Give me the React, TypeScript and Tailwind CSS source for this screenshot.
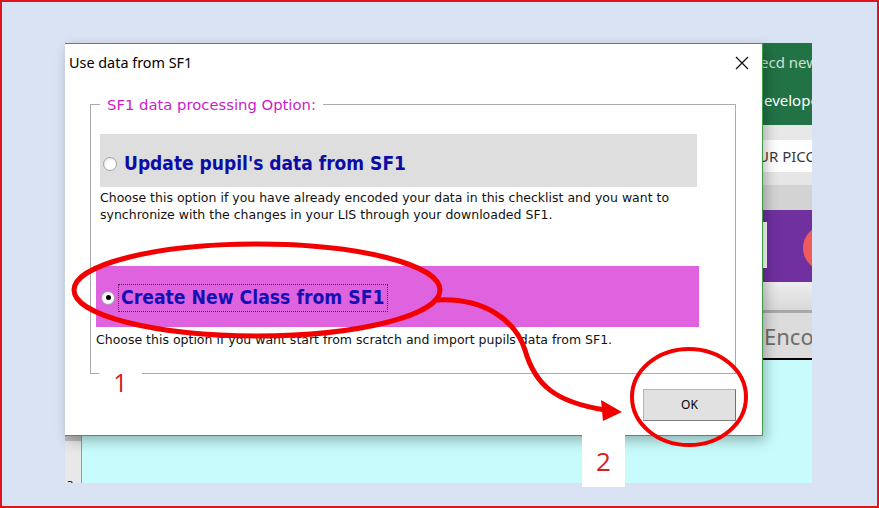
import React from "react";

function Radio({ checked }: { checked?: boolean }) {
  return (
    <div className="w-[14px] h-[14px] rounded-full border border-[#a6a6a6] bg-[radial-gradient(circle_at_60%_60%,#ffffff_40%,#dcdcdc_100%)] flex items-center justify-center shrink-0">
      {checked ? <div className="w-[5px] h-[5px] rounded-full bg-black" /> : null}
    </div>
  );
}

export default function App() {
  return (
    <div className="relative w-[879px] h-[508px] overflow-hidden border-2 border-[#e0141c] bg-[#dae3f3] pt-[41px] pl-[63px]">
      <div className="grid grid-cols-[698px_49px] grid-rows-[393px_47px] w-[747px] h-[440px]">
        {/* Dialog */}
        <div className="relative z-10 col-start-1 row-start-1 bg-white border-t border-r border-b border-[#3f9b4b] shadow-[3px_5px_12px_rgba(0,0,0,0.28)] flex flex-col">
          <div className="h-[52px] flex items-start justify-between pl-[4px] pt-[10px] pr-[13px]">
            <span className="font-['Noto_Sans',sans-serif] text-[14.4px] leading-[18px] text-black">Use data from SF1</span>
            <svg width="14" height="14" viewBox="0 0 14 14" className="mt-[2px]">
              <path d="M1 1 L13 13 M13 1 L1 13" stroke="#111" strokeWidth="1.3" fill="none" />
            </svg>
          </div>
          <fieldset className="ml-[25px] w-[646px] h-[278px] border border-[#ababab] p-0 m-0 font-['DejaVu_Sans',sans-serif]">
            <legend className="ml-[9px] px-[7px] text-[14.8px] leading-[17px] text-[#c81ec8]">SF1 data processing Option:</legend>
            <div className="ml-[9px] mt-[21px] w-[597px] h-[53px] bg-[#dedede] flex items-center pt-[6px] font-['DejaVu_Sans_Condensed',sans-serif]">
              <div className="ml-[3px]"><Radio /></div>
              <span className="ml-[7px] text-[19px] leading-[23px] font-bold text-[#0c0ca6]">Update pupil's data from SF1</span>
            </div>
            <div className="ml-[9px] mt-[2px] text-[12.5px] leading-[17px] text-[#111]">
              <div className="whitespace-nowrap">Choose this option if you have already encoded your data in this checklist and you want to</div>
              <div className="whitespace-nowrap">synchronize with the changes in your LIS through your downloaded SF1.</div>
            </div>
            <div className="ml-[5px] mt-[43px] w-[603px] h-[61px] bg-[#df63df] flex items-center pt-[2px] font-['DejaVu_Sans_Condensed',sans-serif]">
              <div className="ml-[5px]"><Radio checked /></div>
              <div className="ml-[3px] h-[28px] px-[2px] flex items-center border border-dotted border-[#333]">
                <span className="text-[19.2px] leading-[23px] font-bold text-[#1410b4]">Create New Class from SF1</span>
              </div>
            </div>
            <div className="ml-[5px] mt-[4px] text-[12.5px] leading-[17px] text-[#111] whitespace-nowrap">
              Choose this option if you want start from scratch and import pupils data from SF1.
            </div>
          </fieldset>
          <div className="flex items-start">
            <div className="ml-[34px] mt-[-4px] w-[43px] h-[25px] bg-white text-center font-['Open_Sans',sans-serif] text-[25px] leading-[25px] text-[#d42020]">1</div>
            <button className="ml-auto mr-[26px] mt-[15px] w-[93px] h-[32px] bg-[#e1e1e1] border border-[#b4b4b4] border-r-[#707070] border-b-[#808080] font-['Noto_Sans',sans-serif] text-[12px] text-black">
              OK
            </button>
          </div>
        </div>

        {/* Right strip of Excel window */}
        <div className="col-start-2 row-start-1 row-span-2 flex flex-col overflow-hidden font-['Noto_Sans',sans-serif]">
          <div className="h-[82px] bg-[#217346] flex flex-col pt-[9px]">
            <span className="ml-[-3px] text-[15px] leading-[20px] text-[#cfe2d4] whitespace-nowrap">ecd new</span>
            <span className="ml-[1px] mt-[18px] text-[15px] leading-[20px] text-white whitespace-nowrap">evelope</span>
          </div>
          <div className="h-[15px] bg-[#e8e8e8]" />
          <div className="h-[32px] bg-white flex items-center">
            <span className="ml-[-5px] text-[15px] text-[#3a3a3a] whitespace-nowrap">UR PICC</span>
          </div>
          <div className="h-[13px] bg-[#e6e6e6]" />
          <div className="h-[25px] bg-[#d3d3d3]" />
          <div className="relative h-[72px] bg-[#7030a0] overflow-hidden">
            <div className="mt-[12px] w-[4px] h-[46px] bg-white" />
            <div className="absolute left-[40px] top-[15px] w-[46px] h-[46px] rounded-full bg-[#f05a5a]" />
          </div>
          <div className="h-[28px] bg-gradient-to-b from-[#ededed] to-[#d9d9d9]" />
          <div className="h-[3px] bg-[#a8a8a8]" />
          <div className="h-[45px] bg-[#dcdcdc] flex items-center">
            <span className="ml-[1px] text-[22px] leading-[26px] text-[#6e6e6e] whitespace-nowrap">Enco</span>
          </div>
          <div className="h-[2px] bg-black" />
          <div className="flex-1 bg-[#c8fcfc]" />
        </div>

        {/* Bottom strip of Excel window */}
        <div className="col-start-1 row-start-2 flex">
          <div className="w-[17px] bg-[#e8e8e8] border-r border-[#9a9a9a] flex flex-col overflow-hidden">
            <div className="h-[5px] bg-[#bdbdbd]" />
            <div className="flex-1" />
            <span className="ml-[2px] mb-[-9px] font-['Noto_Sans',sans-serif] text-[11px] leading-[14px] text-black">3</span>
          </div>
          <div className="flex-1 bg-[#c8fcfc]" />
        </div>
      </div>

      {/* label 2 */}
      <div className="absolute left-[580px] top-[433px] w-[43px] h-[52px] bg-white flex items-center justify-center font-['Open_Sans',sans-serif] text-[26px] text-[#d42020] z-20">
        2
      </div>

      {/* Annotations */}
      <svg className="absolute left-[-2px] top-[-2px] z-30 pointer-events-none" width="879" height="508" viewBox="0 0 879 508">
        <ellipse cx="257" cy="290" rx="183" ry="46" fill="none" stroke="#f20000" strokeWidth="5" />
        <ellipse cx="689" cy="397" rx="57" ry="48" fill="none" stroke="#f20000" strokeWidth="4" />
        <path d="M437 300 C 485 298, 515 320, 525 350 C 535 385, 555 402, 605 410" fill="none" stroke="#f20000" strokeWidth="5" />
        <polygon points="622,412 601,400 603,421" fill="#f20000" />
      </svg>
    </div>
  );
}
